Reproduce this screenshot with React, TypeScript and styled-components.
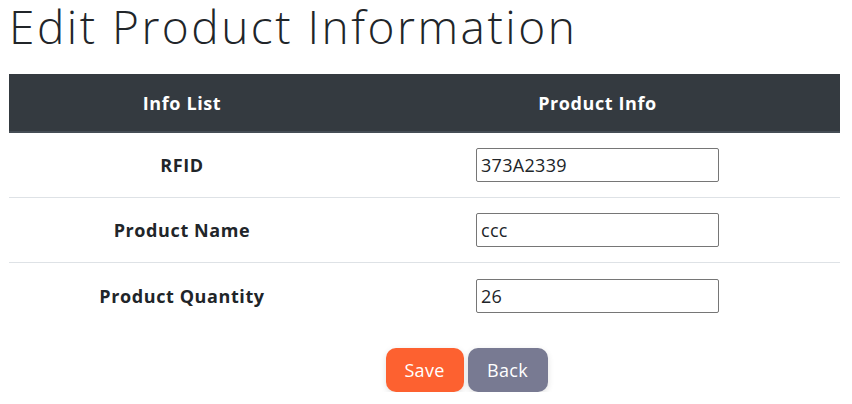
import React from "react";
import styled, { createGlobalStyle } from "styled-components";

const GlobalStyle = createGlobalStyle`
  html, body { margin: 0; padding: 0; background: #fff; }
  body { font-family: "Open Sans", "DejaVu Sans", sans-serif; color: #212529; }
  * { box-sizing: border-box; }
`;

const Page = styled.div`
  padding: 0 12px 0 9px;
  width: 852px;
`;

const Title = styled.h1`
  margin: 0 0 22px 0;
  font-family: "Open Sans", sans-serif;
  font-weight: 300;
  font-size: 46px;
  line-height: 52px;
  letter-spacing: 2.5px;
  color: #212529;
`;

const Table = styled.div`
  display: grid;
  grid-template-columns: 346px 485px;
  width: 831px;
`;

const HeadCell = styled.div`
  background: #343a40;
  color: #fff;
  font-weight: 700;
  font-size: 18px;
  letter-spacing: 0.6px;
  height: 59px;
  display: flex;
  align-items: center;
  justify-content: center;
  border-bottom: 2px solid #454d55;
`;

const Cell = styled.div<{ $last?: boolean }>`
  height: 65px;
  display: flex;
  align-items: center;
  justify-content: center;
  border-bottom: ${(p) => (p.$last ? "none" : "1px solid #dee2e6")};
  font-weight: 700;
  font-size: 18px;
  letter-spacing: 0.6px;
  color: #212529;
`;

const Input = styled.input`
  width: 243px;
  height: 34px;
  border: 1px solid #767676;
  border-radius: 2px;
  padding: 1px 4px;
  font-family: "Open Sans", sans-serif;
  font-size: 18px;
  letter-spacing: 0.3px;
  color: #212529;
  outline: none;
`;

const Actions = styled.div`
  display: grid;
  grid-template-columns: 1fr auto 1fr;
  column-gap: 4px;
  width: 831px;
  margin-top: 20px;
`;

const Button = styled.button<{ $variant: "save" | "back" }>`
  height: 44px;
  width: ${(p) => (p.$variant === "save" ? "78px" : "80px")};
  border: none;
  border-radius: 10px;
  background: ${(p) => (p.$variant === "save" ? "#fd6130" : "#787a92")};
  color: #fff;
  font-family: "Open Sans", sans-serif;
  font-size: 18px;
  letter-spacing: 0.3px;
  box-shadow: 0 2px 6px rgba(0, 0, 0, 0.12);
  justify-self: ${(p) => (p.$variant === "save" ? "center" : "start")};
  cursor: pointer;
`;

const rows = [
  { label: "RFID", value: "373A2339" },
  { label: "Product Name", value: "ccc" },
  { label: "Product Quantity", value: "26" },
];

export default function App() {
  return (
    <Page>
      <GlobalStyle />
      <Title>Edit Product Information</Title>
      <Table>
        <HeadCell>Info List</HeadCell>
        <HeadCell>Product Info</HeadCell>
        {rows.map((r, i) => (
          <React.Fragment key={r.label}>
            <Cell $last={i === rows.length - 1}>{r.label}</Cell>
            <Cell $last={i === rows.length - 1}>
              <Input defaultValue={r.value} />
            </Cell>
          </React.Fragment>
        ))}
      </Table>
      <Actions>
        <span />
        <Button $variant="save">Save</Button>
        <Button $variant="back">Back</Button>
      </Actions>
    </Page>
  );
}
